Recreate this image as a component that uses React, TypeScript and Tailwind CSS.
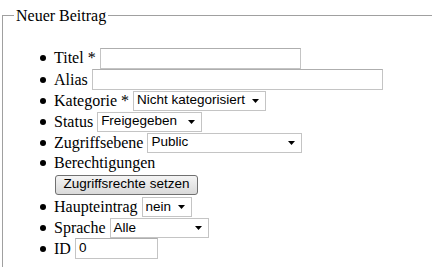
import React from "react";

function Bullet() {
  return <span className="w-[6px] h-[6px] rounded-full bg-black mr-[8px] shrink-0" />;
}

function TextInput({ w, value = "" }: { w: number; value?: string }) {
  return (
    <span
      className="h-[21px] border border-[#c4c4c4] border-t-[#aeaeae] bg-white flex items-center pl-[3px] text-[13.5px] text-black font-['Liberation_Sans',Arial,sans-serif] box-border"
      style={{ width: w }}
    >
      {value}
    </span>
  );
}

function Select({ w, value }: { w: number; value: string }) {
  return (
    <span
      className="h-[20px] border border-[#c4c4c4] bg-white flex items-center justify-between pl-[3px] pr-[6px] text-[13.5px] text-black font-['Liberation_Sans',Arial,sans-serif] box-border"
      style={{ width: w }}
    >
      <span className="whitespace-nowrap">{value}</span>
      <svg width="7" height="4" viewBox="0 0 7 4" className="shrink-0">
        <path d="M0 0H7L3.5 4Z" fill="#000" />
      </svg>
    </span>
  );
}

function Row({ h, label, children }: { h: number; label: string; children?: React.ReactNode }) {
  return (
    <li className="flex items-center gap-[4px]" style={{ height: h }}>
      <Bullet />
      <span className="leading-[18px] whitespace-nowrap -ml-[4px]">{label}</span>
      {children}
    </li>
  );
}

export default function App() {
  return (
    <div className="w-[432px] h-[267px] overflow-hidden bg-white text-black font-['Liberation_Serif','Times_New_Roman',serif] text-[16px]">
      <fieldset className="ml-[2px] mt-[6px] border border-r-0 border-[#a0a0a0] pb-[20px]">
        <legend className="ml-[11px] px-[2px] leading-[19px]">Neuer Beitrag</legend>
        <ul className="mt-[22px] pl-[37px]">
          <Row h={22} label="Titel *">
            <TextInput w={201} />
          </Row>
          <Row h={21} label="Alias">
            <TextInput w={291} />
          </Row>
          <Row h={21} label="Kategorie *">
            <Select w={133} value="Nicht kategorisiert" />
          </Row>
          <Row h={21} label="Status">
            <Select w={105} value="Freigegeben" />
          </Row>
          <Row h={21} label="Zugriffsebene">
            <Select w={155} value="Public" />
          </Row>
          <li>
            <div className="flex items-center h-[20px]">
              <Bullet />
              <span className="leading-[18px]">Berechtigungen</span>
            </div>
            <div className="flex items-center h-[23px] pl-[15px]">
              <span className="h-[20px] w-[143px] rounded-[3px] border border-[#707070] bg-gradient-to-b from-[#f4f4f4] to-[#d9d9d9] flex items-center justify-center text-[13.5px] font-['Liberation_Sans',Arial,sans-serif] box-border">
                Zugriffsrechte setzen
              </span>
            </div>
          </li>
          <Row h={22} label="Haupteintrag">
            <Select w={50} value="nein" />
          </Row>
          <Row h={20} label="Sprache">
            <Select w={99} value="Alle" />
          </Row>
          <Row h={21} label="ID">
            <TextInput w={83} value="0" />
          </Row>
        </ul>
      </fieldset>
    </div>
  );
}
